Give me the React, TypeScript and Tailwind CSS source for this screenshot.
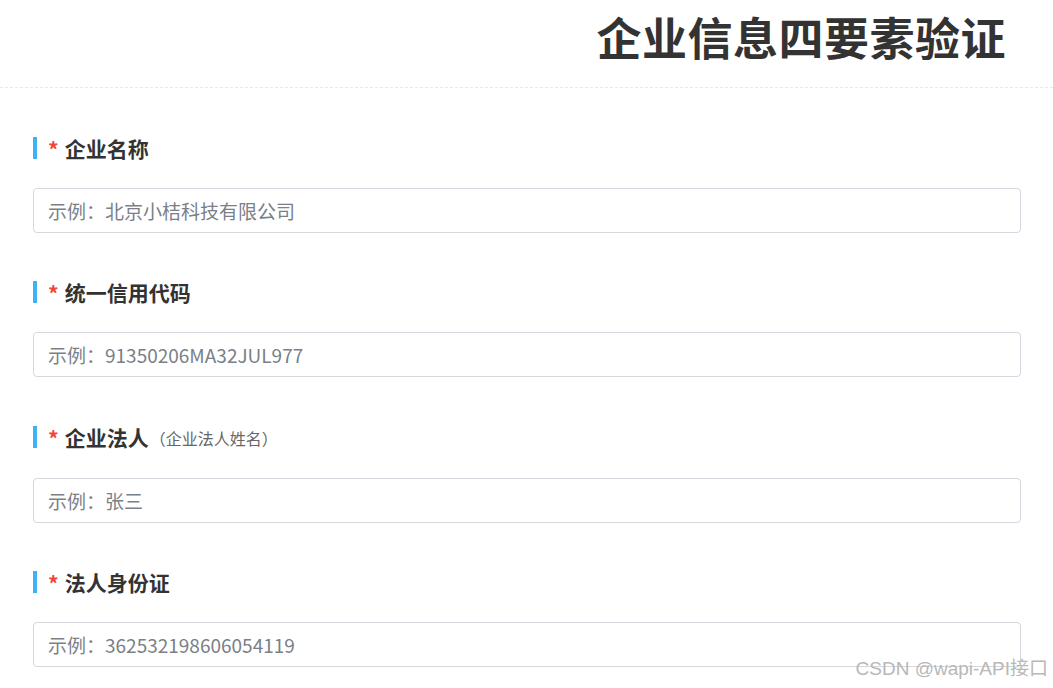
const fields = [
  { label: "企业名称", placeholder: "示例：北京小桔科技有限公司" },
  { label: "统一信用代码", placeholder: "示例：91350206MA32JUL977" },
  { label: "企业法人", hint: "（企业法人姓名）", placeholder: "示例：张三" },
  { label: "法人身份证", placeholder: "示例：362532198606054119" },
]

function Field({ label, hint, placeholder }: { label: string; hint?: string; placeholder: string }) {
  return (
    <div className="flex flex-col">
      <div className={`flex items-center ${hint ? "h-[26px]" : "h-[24px]"}`}>
        <span className="w-[4px] h-[22px] bg-[#3fb1f5]" />
        <span className="ml-[11px] text-[21px] font-bold text-[#f0453a] leading-none mt-[2px]">*</span>
        <span className="ml-[6px] text-[21px] font-bold text-[#333333] leading-none">{label}</span>
        {hint && <span className="ml-[1px] text-[16px] text-[#666666] leading-none mt-[2px]">{hint}</span>}
      </div>
      <input
        className="mt-[28px] h-[45px] w-full rounded-[4px] border border-[#d4d7de] px-[14px] text-[19px] text-[#333] placeholder:text-[#7a7f88] outline-none"
        placeholder={placeholder}
      />
    </div>
  )
}

export default function App() {
  return (
    <div
      className="relative w-[1053px] h-[688px] overflow-hidden bg-white"
      style={{ fontFamily: '"Noto Sans CJK SC", "Noto Sans", sans-serif' }}
    >
      <div className="flex justify-end h-[88px] pr-[47px] border-b border-dashed border-[#e6e8eb]">
        <h1 className="text-[45px] font-bold text-[#333333] leading-none mt-[14px] tracking-[0.5px]">企业信息四要素验证</h1>
      </div>
      <div className="flex flex-col gap-[47px] pl-[33px] pr-[32px] pt-[48px]">
        {fields.map((f) => (
          <Field key={f.label} {...f} />
        ))}
      </div>
      <div
        className="absolute right-[5px] bottom-[5px] text-[19px] text-[#b8b8b8]"
        style={{ fontFamily: '"Liberation Sans", "Noto Sans CJK SC", sans-serif' }}
      >
        CSDN @wapi-API接口
      </div>
    </div>
  )
}
